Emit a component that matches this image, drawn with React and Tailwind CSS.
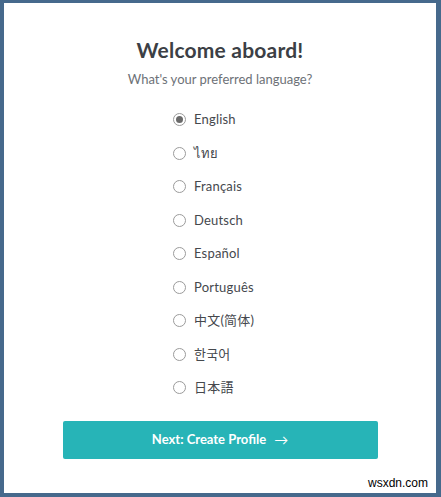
import React, { useState } from "react";

const languages = ["English", "ไทย", "Français", "Deutsch", "Español", "Português", "中文(简体)", "한국어", "日本語"];

export default function App() {
  const [selected, setSelected] = useState("English");

  return (
    <div className="h-[497px] w-[441px] bg-[#46698c] pt-[3px] pb-[4px] pl-[4px] pr-[5px] relative" style={{ fontFamily: "Lato, 'Noto Sans', 'Noto Sans CJK SC', sans-serif" }}>
      <div className="h-full bg-white flex flex-col items-center">
        <h1 className="mt-[33px] text-[21px] leading-[28px] font-bold text-[#3c3f45] tracking-[0.2px]">Welcome aboard!</h1>
        <p className="mt-[6px] text-[13px] leading-[18px] text-[#6d7177]">What's your preferred language?</p>

        <div className="mt-[15px] flex flex-col self-start ml-[169px]">
          {languages.map((lang) => (
            <label key={lang} className="flex items-center h-[33.5px] cursor-pointer" onClick={() => setSelected(lang)}>
              <span className="w-[13px] h-[13px] rounded-full border border-[#9b9b9b] flex items-center justify-center bg-white">
                {selected === lang && <span className="w-[7px] h-[7px] rounded-full bg-[#6a6a6a]" />}
              </span>
              <span className="ml-[8px] text-[13px] text-[#45484d] tracking-[0.2px]" style={{ fontFamily: "Lato, 'Noto Sans', 'Noto Sans CJK KR', 'Noto Sans CJK JP', sans-serif" }}>{lang}</span>
            </label>
          ))}
        </div>

        <button className="mt-[16px] w-[315px] h-[38px] rounded-[2px] bg-[#27b4b7] text-white text-[13px] font-bold flex items-center justify-center gap-[8px]">
          <span>Next: Create Profile</span>
          <span className="text-[14px] font-normal">→</span>
        </button>
      </div>
      <span className="absolute right-[11px] bottom-[7px] text-[12px] leading-[14px] text-black bg-white px-[2px]" style={{ fontFamily: "'Liberation Sans', sans-serif" }}>wsxdn.com</span>
    </div>
  );
}
